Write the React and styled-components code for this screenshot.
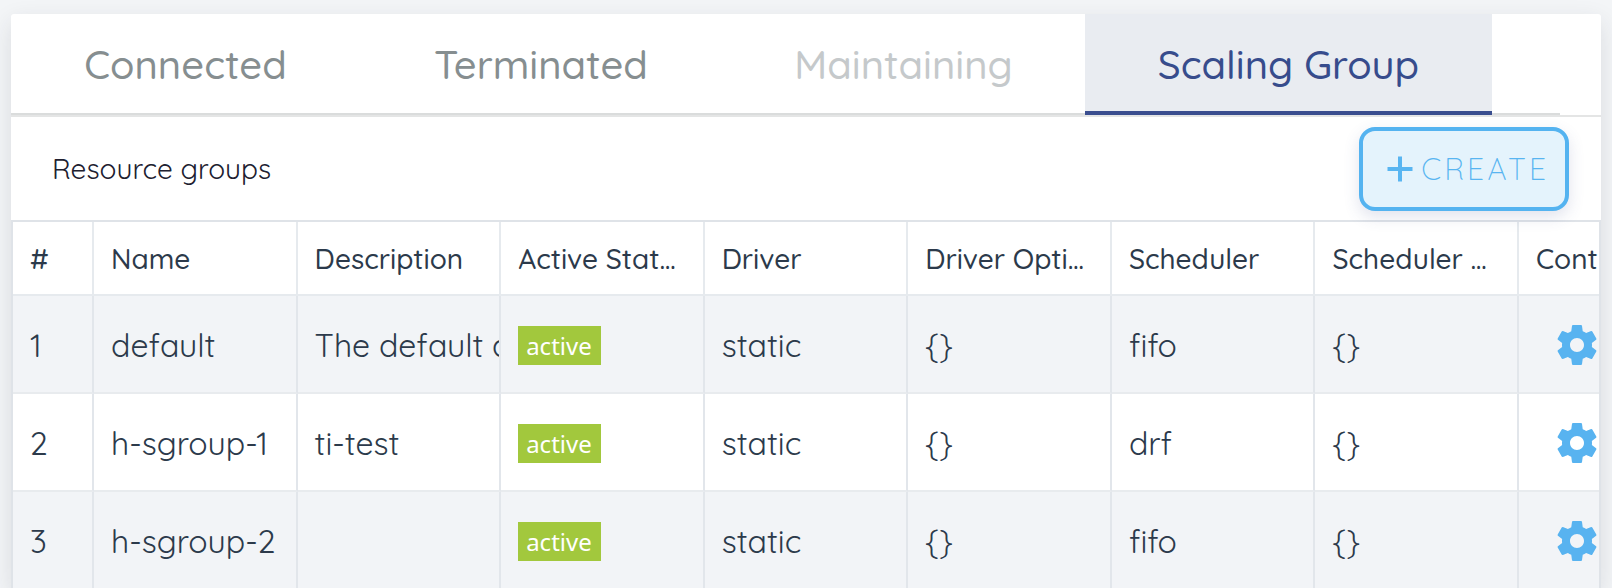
import React from "react";
import styled, { createGlobalStyle } from "styled-components";

const GlobalStyle = createGlobalStyle`
  *, *::before, *::after { box-sizing: border-box; }
  body {
    margin: 0;
    background: #f3f5f7;
    font-family: Quicksand, Lato, "Open Sans", sans-serif;
    color: #2c3a4b;
  }
  button { font-family: inherit; margin: 0; cursor: pointer; }
`;

const Page = styled.main`
  padding: 14px 11px 0;
  overflow: hidden;
`;

const Card = styled.section`
  background: #fff;
  border-radius: 3px 3px 0 0;
  box-shadow: 0 8px 24px rgba(40, 45, 60, 0.12);
`;

const TabBar = styled.div`
  height: 103px;
  padding-right: 41px;
  border-bottom: 2px solid #e4e5e5;
`;

const TabList = styled.div`
  height: 101px;
  display: grid;
  grid-template-columns: 349fr 362fr 363fr 407fr 68fr;
  border-bottom: 2px solid #dadcdc;
`;

const Tab = styled.button`
  height: 101px;
  padding: 3px 0 0;
  border: 0;
  border-bottom: 4px solid ${(p) => (p.$active ? "#3a4e8f" : "transparent")};
  background: ${(p) => (p.$active ? "#e9ecf1" : "transparent")};
  color: ${(p) => (p.$active ? "#374c8c" : "#868e90")};
  font-size: 40px;
  font-weight: 500;
  line-height: 48px;
  white-space: nowrap;
  &:disabled { color: #c5c9cb; cursor: default; }
`;

const Toolbar = styled.header`
  height: 103px;
  padding: 1px 32px 0 41px;
  display: flex;
  align-items: center;
  justify-content: space-between;
`;

const Title = styled.h2`
  margin: 0;
  font-size: 28px;
  line-height: 40px;
  font-weight: 400;
  color: #20202f;
`;

const CreateButton = styled.button`
  height: 84px;
  padding: 0 16px 0 24px;
  display: flex;
  align-items: center;
  gap: 8px;
  border: 4px solid #54b3f0;
  border-radius: 16px;
  background: #e4f3fc;
  box-shadow: 0 6px 16px rgba(70, 80, 140, 0.16);
  color: #58b5f1;
  font-size: 30px;
  font-weight: 300;
  letter-spacing: 3px;
`;

const TableFrame = styled.div`
  overflow: hidden;
  border: 2px solid #dfe3e8;
  border-bottom: 0;
`;

const Table = styled.table`
  width: 107.8%;
  table-layout: fixed;
  border-collapse: separate;
  border-spacing: 0;
`;

const HeadCell = styled.th`
  width: ${(p) => (p.$narrow ? "81px" : "auto")};
  height: 74px;
  padding: 2px 17px 0;
  border-right: 2px solid #e6eaee;
  border-bottom: 2px solid #e6eaee;
  overflow: hidden;
  text-overflow: ellipsis;
  white-space: nowrap;
  text-align: left;
  font-size: 28px;
  line-height: 36px;
  font-weight: 500;
`;

const Cell = styled.td`
  height: 98px;
  padding: 2px 0 0 17px;
  border-right: 2px solid #e2e6eb;
  border-bottom: 2px solid #e8ebee;
  overflow: hidden;
  white-space: nowrap;
  font-size: 32px;
  line-height: 40px;
`;

const Row = styled.tr`
  background: #fff;
  &:nth-child(odd) { background: #f2f4f7; }
  &:last-child ${Cell} { height: 96px; border-bottom: 0; }
`;

const Badge = styled.span`
  display: block;
  width: max-content;
  padding: 0 9px 0 8px;
  background: #a2c83d;
  color: #fff;
  font-family: "Noto Sans", "Open Sans", sans-serif;
  font-size: 24px;
  line-height: 39px;
`;

const GearButton = styled.button`
  display: block;
  margin-left: 17px;
  padding: 0;
  border: 0;
  background: none;
  color: #58b3f0;
  svg { display: block; }
`;

const PlusIcon = () => (
  <svg width="26" height="26" viewBox="0 0 26 26" aria-hidden="true">
    <path d="M13 0.5v25M0.5 13h25" stroke="currentColor" strokeWidth="4" />
  </svg>
);

const GearIcon = () => (
  <svg width="48" height="48" viewBox="0 0 24 24" fill="currentColor" aria-hidden="true">
    <path d="M19.43 12.98c.04-.32.07-.64.07-.98s-.03-.66-.07-.98l2.11-1.65c.19-.15.24-.42.12-.64l-2-3.46c-.12-.22-.39-.3-.61-.22l-2.49 1c-.52-.4-1.08-.73-1.69-.98l-.38-2.65C14.46 2.18 14.25 2 14 2h-4c-.25 0-.46.18-.49.42l-.38 2.65c-.61.25-1.17.59-1.69.98l-2.49-1c-.23-.09-.49 0-.61.22l-2 3.46c-.13.22-.07.49.12.64l2.11 1.65c-.04.32-.07.65-.07.98s.03.66.07.98l-2.11 1.65c-.19.15-.24.42-.12.64l2 3.46c.12.22.39.3.61.22l2.49-1c.52.4 1.08.73 1.69.98l.38 2.65c.03.24.24.42.49.42h4c.25 0 .46-.18.49-.42l.38-2.65c.61-.25 1.17-.59 1.69-.98l2.49 1c.23.09.49 0 .61-.22l2-3.46c.12-.22.07-.49-.12-.64l-2.11-1.65zM12 15.5c-1.93 0-3.5-1.57-3.5-3.5s1.57-3.5 3.5-3.5 3.5 1.57 3.5 3.5-1.57 3.5-3.5 3.5z" />
  </svg>
);

const tabs = [
  { label: "Connected" },
  { label: "Terminated" },
  { label: "Maintaining", disabled: true },
  { label: "Scaling Group", active: true },
];

const columns = [
  "#", "Name", "Description", "Active Status", "Driver",
  "Driver Options", "Scheduler", "Scheduler Options", "Control",
];

const groups = [
  { name: "default", description: "The default agent", scheduler: "fifo" },
  { name: "h-sgroup-1", description: "ti-test", scheduler: "drf" },
  { name: "h-sgroup-2", description: "", scheduler: "fifo" },
];

export default function App() {
  return (
    <Page>
      <GlobalStyle />
      <Card>
        <TabBar>
          <TabList role="tablist">
            {tabs.map((t) => (
              <Tab key={t.label} type="button" role="tab" aria-selected={!!t.active} $active={t.active} disabled={t.disabled}>
                {t.label}
              </Tab>
            ))}
          </TabList>
        </TabBar>
        <Toolbar>
          <Title>Resource groups</Title>
          <CreateButton type="button"><PlusIcon />CREATE</CreateButton>
        </Toolbar>
        <TableFrame>
          <Table>
            <thead>
              <tr>
                {columns.map((c) => (
                  <HeadCell key={c} scope="col" $narrow={c === "#"}>{c}</HeadCell>
                ))}
              </tr>
            </thead>
            <tbody>
              {groups.map((g, i) => (
                <Row key={g.name}>
                  <Cell>{i + 1}</Cell>
                  <Cell>{g.name}</Cell>
                  <Cell>{g.description}</Cell>
                  <Cell><Badge>active</Badge></Cell>
                  <Cell>static</Cell>
                  <Cell>{"{}"}</Cell>
                  <Cell>{g.scheduler}</Cell>
                  <Cell>{"{}"}</Cell>
                  <Cell>
                    <GearButton type="button" aria-label={`Settings for ${g.name}`}><GearIcon /></GearButton>
                  </Cell>
                </Row>
              ))}
            </tbody>
          </Table>
        </TableFrame>
      </Card>
    </Page>
  );
}
